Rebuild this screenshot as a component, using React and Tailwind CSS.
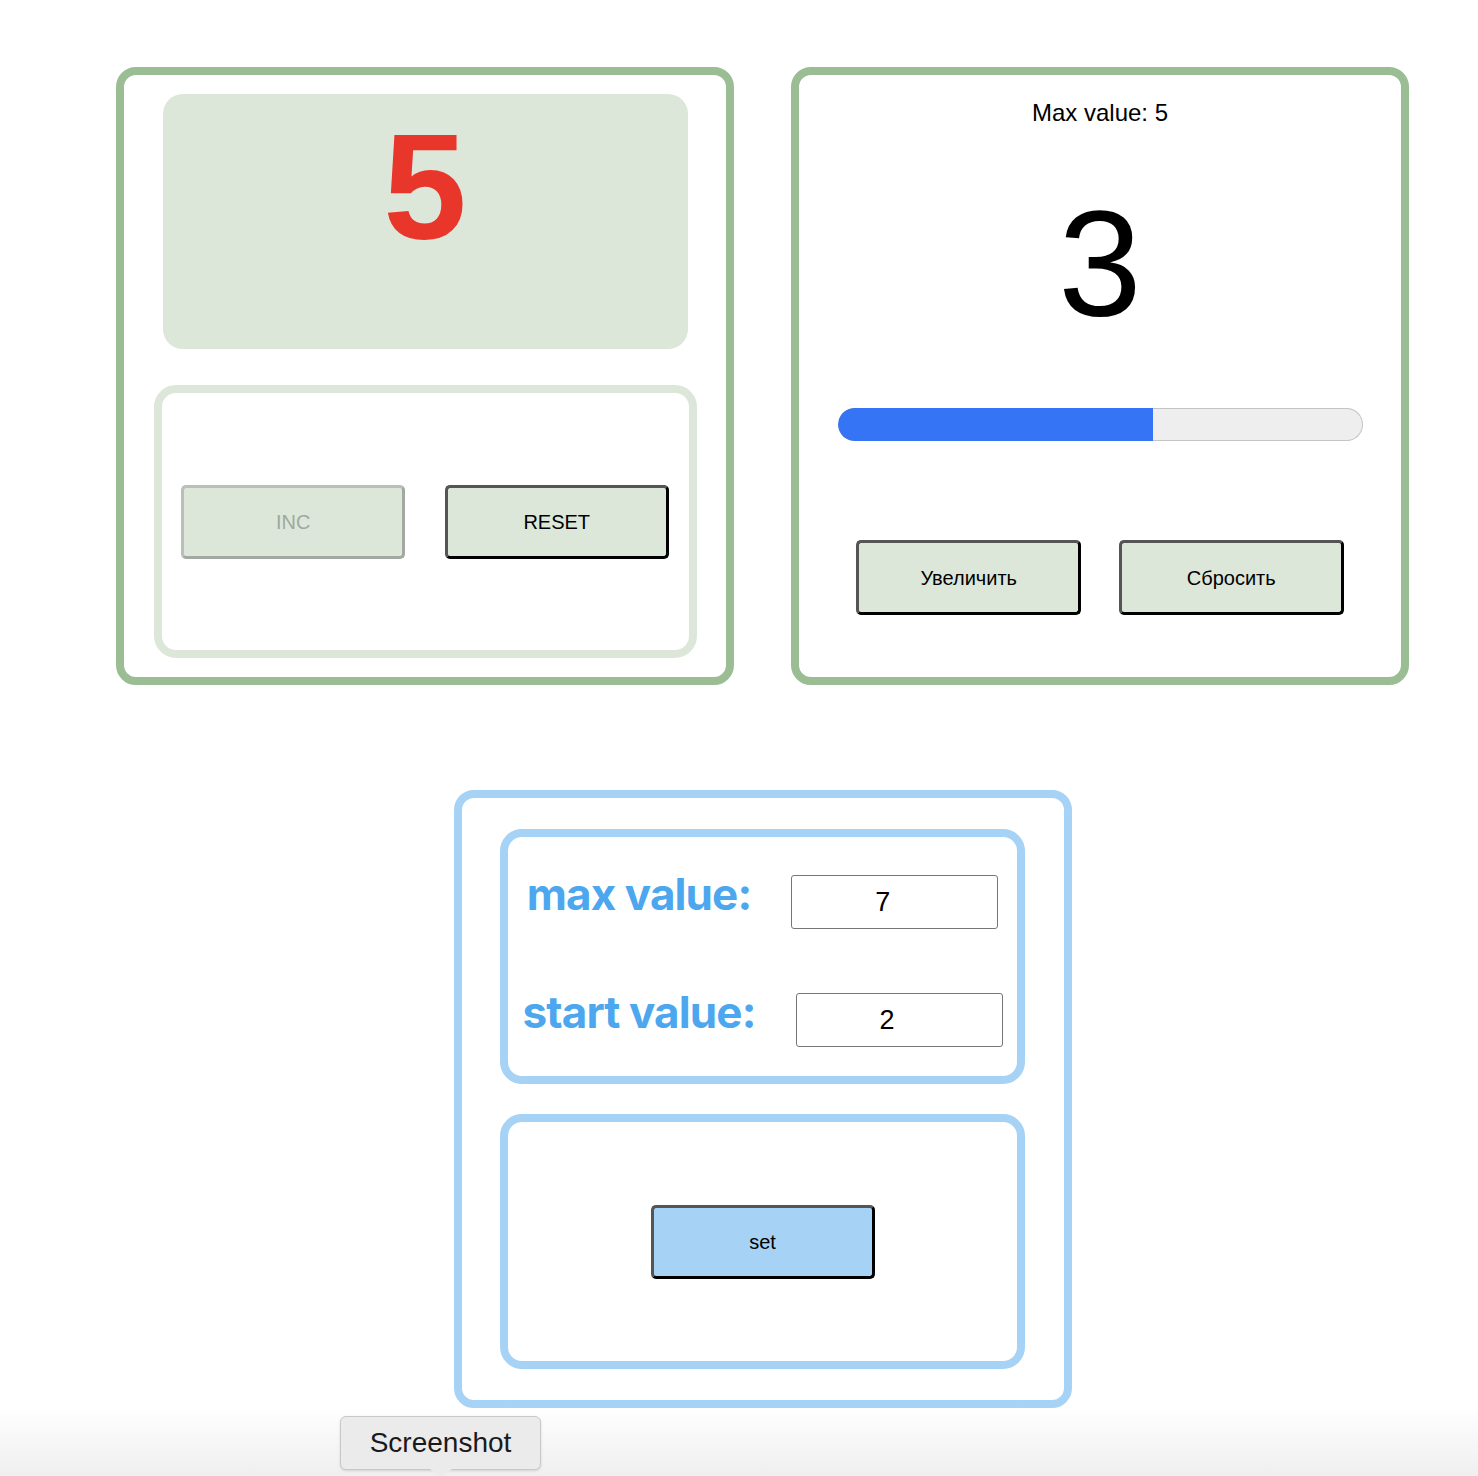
const btn =
  "w-[224px] h-[74px] rounded-[5px] border-[3px] text-[20px] flex items-center justify-center"

function ClassicCounter() {
  return (
    <div className="w-[618px] h-[618px] border-8 border-[#9abd94] rounded-[20px] flex flex-col items-center pt-[19px]">
      {/* Display */}
      <div className="w-[525px] h-[255px] rounded-[20px] bg-[#dce7da] flex justify-center pt-[18px]">
        <span className="text-[150px] leading-none font-bold text-[#e9362a]">5</span>
      </div>

      {/* Controls */}
      <div className="mt-[36px] w-[543px] h-[273px] border-8 border-[#dce7da] rounded-[22px] flex items-center justify-around">
        <button
          disabled
          className={`${btn} bg-[#dce7da] text-[#a0a8a0] border-t-[#b8c0b7] border-l-[#b8c0b7] border-r-[#a3a9a2] border-b-[#a3a9a2]`}
        >
          INC
        </button>
        <button
          className={`${btn} bg-[#dce7da] text-black border-t-[#555] border-l-[#555] border-r-black border-b-black`}
        >
          RESET
        </button>
      </div>
    </div>
  )
}

function ProgressCounter() {
  const max = 5
  const value = 3
  return (
    <div className="w-[618px] h-[618px] border-8 border-[#9abd94] rounded-[20px] flex flex-col items-center">
      <p className="mt-[26px] text-[24px] leading-none text-black">Max value: {max}</p>
      <p className="mt-[64px] text-[150px] leading-none text-black">{value}</p>

      {/* Progress */}
      <div className="mt-[69px] w-[525px] h-[33px] rounded-full bg-[#eeeeee] shadow-[inset_0_0_0_1px_#c4c4c4] overflow-hidden flex">
        <div className="h-full bg-[#3575f5] rounded-l-full" style={{ width: `${(value / max) * 100}%` }} />
      </div>

      <div className="mt-[99px] w-[525px] flex justify-around">
        <button className={`${btn} w-[225px] h-[75px] bg-[#dce7da] text-black border-t-[#555] border-l-[#555] border-r-black border-b-black`}>
          Увеличить
        </button>
        <button className={`${btn} w-[225px] h-[75px] bg-[#dce7da] text-black border-t-[#555] border-l-[#555] border-r-black border-b-black`}>
          Сбросить
        </button>
      </div>
    </div>
  )
}

function Field({ label, value }) {
  return (
    <div className="h-[54px] flex items-center justify-center gap-10">
      <span className="font-['Inter',sans-serif] font-bold text-[44px] tracking-[-0.02em] text-[#4ca7ee] leading-none mb-[16px]">
        {label}
      </span>
      <input
        type="text"
        readOnly
        value={value}
        className="w-[207px] h-[54px] border border-[#767676] rounded-[3px] text-center pr-[24px] text-[27px] text-black outline-none"
      />
    </div>
  )
}

function Settings() {
  return (
    <div className="mt-[105px] w-[618px] h-[618px] border-8 border-[#a5d2f5] rounded-[20px] flex flex-col items-center pt-[31px]">
      <div className="w-[525px] h-[255px] border-8 border-[#a5d2f5] rounded-[22px] flex flex-col pt-[38px] gap-[64px]">
        <Field label="max value:" value="7" />
        <Field label="start value:" value="2" />
      </div>
      <div className="mt-[30px] w-[525px] h-[255px] border-8 border-[#a5d2f5] rounded-[22px] flex items-center justify-center">
        <button className={`${btn} bg-[#a5d2f5] text-black border-t-[#555] border-l-[#555] border-r-black border-b-black`}>
          set
        </button>
      </div>
    </div>
  )
}

export default function App() {
  return (
    <div className="relative min-h-[1476px] overflow-hidden bg-white font-['Liberation_Sans',Arial,sans-serif]">
      <div className="w-[1525px] flex flex-col items-center pt-[67px]">
        <div className="flex gap-[57px]">
          <ClassicCounter />
          <ProgressCounter />
        </div>
        <Settings />
      </div>

      {/* Bottom shade */}
      <div className="absolute inset-x-0 bottom-0 h-[70px] bg-linear-to-b from-white/0 to-[#efefef]" />

      {/* Tooltip */}
      <div className="absolute left-[340px] top-[1416px] w-[201px] h-[54px] bg-[#ebebeb] border border-[#c8c8c8] rounded-[6px] shadow-sm flex items-center justify-center text-[28px] text-[#1a1a1a]">
        Screenshot
      </div>
      <div className="absolute left-[430px] top-[1469px] w-0 h-0 border-l-[11px] border-r-[11px] border-t-[8px] border-l-transparent border-r-transparent border-t-[#ebebeb]" />
    </div>
  )
}
